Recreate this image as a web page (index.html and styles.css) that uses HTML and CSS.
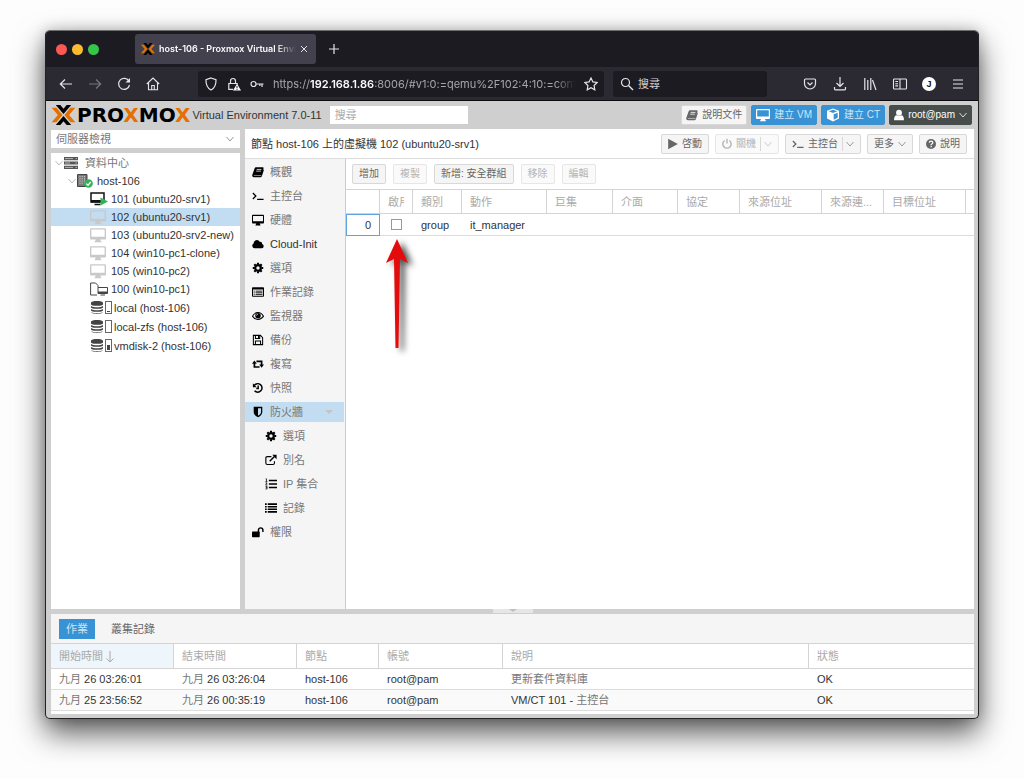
FILE: index.html
```html
<!DOCTYPE html>
<html lang="zh-Hant">
<head>
<meta charset="utf-8">
<title>host-106 - Proxmox Virtual Environment</title>
<link rel="stylesheet" href="styles.css">
</head>
<body>
<svg class="sprite" aria-hidden="true">
  <symbol id="px" viewBox="0 0 26 22"><path d="M4.500 0h5L13 4.200 16.500 0h5L13 10zM4.500 22h5l3.500-4.200 3.500 4.200h5L13 12z" fill="#000"/><path d="M0 3h5.200L12 11l-6.800 8H0l6.800-8zM26 3h-5.200L14 11l6.800 8H26l-6.800-8z" fill="#e57000"/></symbol>
  <symbol id="chev" viewBox="0 0 8 8"><path d="M.5 2L4 6l3.500-4" fill="none" stroke="currentColor"/></symbol>
  <symbol id="book" viewBox="0 0 14 14"><path d="M4.500 1.500h8.200c.7 0 1 .5.8 1.100l-2.300 7.600c-.2.5-.6.8-1.100.8H2.600c-.5 0-.7.6-.2.8h8.200L13.200 4c.6.3.8.6.6 1.100l-2.300 7c-.2.6-.6.9-1.200.9H2.200C.8 13-.1 11.600.4 10.300L3 2.800c.3-.8.8-1.300 1.500-1.300z" fill="currentColor"/><path d="M5.500 4h5.500M4.900 6h5.500" stroke="#fff" stroke-width=".9"/></symbol>
  <symbol id="term" viewBox="0 0 14 14"><path d="M1 3.500L4.500 7 1 10.500M6 11h7.500" fill="none" stroke="currentColor" stroke-width="1.500"/></symbol>
  <symbol id="screen" viewBox="0 0 14 14"><path d="M1 1h12q1 0 1 1v8q0 1-1 1H9l.5 1.500h.5v.8H4v-.8h.5L5 11H1q-1 0-1-1V2q0-1 1-1zm.2 1.200v6.300h11.600V2.200z" fill="currentColor" fill-rule="evenodd"/></symbol>
  <symbol id="cloud" viewBox="0 0 14 14"><path d="M3 12a3 3 0 0 1-1.200-5.600A3.900 3.900 0 0 1 9 4.300a2.300 2.300 0 0 1 2.700 2.800A2.500 2.500 0 0 1 11.500 12z" fill="currentColor"/></symbol>
  <symbol id="gear" viewBox="0 0 14 14"><circle cx="7" cy="7" r="3.300" fill="none" stroke="currentColor" stroke-width="2.600"/><path d="M7 .9v2M7 11.100v2M.9 7h2M11.100 7h2M2.700 2.700l1.400 1.400M9.900 9.900l1.400 1.400M2.700 11.300l1.400-1.400M9.900 4.100l1.400-1.400" stroke="currentColor" stroke-width="2.400"/></symbol>
  <symbol id="listalt" viewBox="0 0 14 14"><path d="M1 1.500h12q1 0 1 1v9q0 1-1 1H1q-1 0-1-1v-9q0-1 1-1zm.2 2.700v7.100h11.600V4.200z" fill="currentColor" fill-rule="evenodd"/><path d="M2 6h1.200M4.200 6h8M2 7.900h1.200M4.200 7.900h8M2 9.800h1.200M4.200 9.800h8" stroke="currentColor"/></symbol>
  <symbol id="eye" viewBox="0 0 14 14"><path d="M.5 7.200Q3.200 3 7 3t6.500 4.200Q10.800 11 7 11T.5 7.200z" fill="none" stroke="currentColor" stroke-width="1.200"/><circle cx="7" cy="6.600" r="3.200" fill="currentColor"/><path d="M5.300 6.500A1.800 1.800 0 0 1 7 4.800" fill="none" stroke="#fff" stroke-width=".8"/></symbol>
  <symbol id="save" viewBox="0 0 14 14"><path d="M1.600 1.600h8.200l2.600 2.600v8.200H1.600zM4 12V8.200h6V12M4 2v3.300h5V2" fill="none" stroke="currentColor" stroke-width="1.200"/><path d="M7 2h1.400v2.700H7z" fill="currentColor"/></symbol>
  <symbol id="retweet" viewBox="0 0 14 14"><path d="M2.800 6v4.500h6M11.200 8.500V4h-6" fill="none" stroke="currentColor" stroke-width="2"/><path d="M0 6.800L2.800 3l2.800 3.800zM8.400 7.500h5.600l-2.800 3.800z" fill="currentColor"/></symbol>
  <symbol id="history" viewBox="0 0 14 14"><path d="M2.600 4A5 5 0 1 1 3 10.300M7.200 4v3.500H5" fill="none" stroke="currentColor" stroke-width="1.700"/><path d="M1 1.500V6h4.500z" fill="currentColor"/></symbol>
  <symbol id="shield" viewBox="0 0 14 14"><path d="M2 1h10v6c0 3-2.500 5-5 6.200C4.500 12 2 10 2 7zm5 1.600v8.900c2-1.100 3.500-2.600 3.500-4.500V2.600z" fill="currentColor" fill-rule="evenodd"/></symbol>
  <symbol id="extlink" viewBox="0 0 14 14"><path d="M7.500 3H2.700Q1 3 1 4.500v6Q1 12.200 2.700 12.200h6.600q1.700 0 1.700-1.700V8.500" fill="none" stroke="currentColor" stroke-width="1.300"/><path d="M5.500 8.500L11 3" stroke="currentColor" stroke-width="1.700"/><path d="M8.500 1H13.500v5z" fill="currentColor"/></symbol>
  <symbol id="listol" viewBox="0 0 14 14"><path d="M4.500 2.800H14M4.500 7H14M4.500 11.200H14" stroke="currentColor" stroke-width="1.800"/><path d="M.8 1h1v3M.5 4.200h2.300M.6 5.800h1.800L.8 8.200h2M.6 9.800h1.800v3H.6M1 11.200h1.400" fill="none" stroke="currentColor" stroke-width=".9"/></symbol>
  <symbol id="list" viewBox="0 0 14 14"><path d="M0 2.500h2M3.200 2.500H14M0 5.500h2M3.200 5.500H14M0 8.500h2M3.200 8.500H14M0 11.500h2M3.200 11.500H14" stroke="currentColor" stroke-width="1.900"/></symbol>
  <symbol id="unlock" viewBox="0 0 14 14"><rect y="6.500" width="9" height="6.500" rx=".8" fill="currentColor"/><path d="M7.500 7V4.800a2.600 2.600 0 0 1 5.200 0V7" fill="none" stroke="currentColor" stroke-width="1.700"/></symbol>
  <symbol id="cube" viewBox="0 0 14 14"><path d="M7 .5l6 2.200v7.800l-6 3-6-3V2.700zm0 1.300L2.800 3.300 7 4.900l4.200-1.600zm.7 4.500v5.500l4-2V4.800z" fill="currentColor" fill-rule="evenodd"/></symbol>
  <symbol id="user" viewBox="1 0 12 14"><circle cx="7" cy="4.300" r="3.500" fill="currentColor"/><path d="M1.200 13.300c-.5-3.200.9-5.800 3-6q2.800 2 5.600 0c2.100.2 3.500 2.800 3 6z" fill="currentColor"/></symbol>
  <symbol id="play" viewBox="1 0 12 14"><path d="M1.200.8l11.600 6.200-11.600 6.200z" fill="currentColor"/></symbol>
  <symbol id="power" viewBox="1 0 12 14"><path d="M4.200 2.800a5 5 0 1 0 5.600 0M7 .8v5.700" fill="none" stroke="currentColor" stroke-width="1.700"/></symbol>
  <symbol id="help" viewBox="1 1 12 12"><circle cx="7" cy="7" r="6" fill="currentColor"/><path d="M4.900 5.300q.2-1.900 2.200-1.900T9.200 5.200Q9.200 6.300 7.200 7.600v.8M7.200 9.400v1.600" fill="none" stroke="#fff" stroke-width="1.500"/></symbol>
  <symbol id="server" viewBox="0 0 14 12"><path d="M0 0h14v3.200H0zM0 4.400h14v3.200H0zM0 8.800h14V12H0z" fill="#555"/><path d="M1 1.600h8M1 6h5M1 10.400h8M11.500 1.600h1.500M11.500 6h1.500M11.500 10.400h1.500" stroke="#ccc" stroke-width=".8"/></symbol>
  <symbol id="node" viewBox="0 0 16 14"><path d="M.5.500h9.500v12H.5z" fill="#777" stroke="#444"/><path d="M3 2v9M5.200 2v9M7.500 2v9" stroke="#ccc" stroke-width="1" stroke-dasharray="1.200 1"/><circle cx="11.500" cy="9.500" r="4.300" fill="#30b455"/><path d="M9.300 9.600l1.700 1.700 2.700-3.300" fill="none" stroke="#fff" stroke-width="1.300"/></symbol>
  <symbol id="disks" viewBox="0 0 12 13"><path d="M0 2c0-2.600 12-2.600 12 0v1.200c0 2.200-12 2.200-12 0zM0 5c2 1.700 10 1.700 12 0v1.200c0 2.200-12 2.200-12 0zM0 8c2 1.700 10 1.700 12 0v1.200c0 2.200-12 2.200-12 0zM0 11c2 1.700 10 1.700 12 0-.500 2.500-11.500 2.500-12 0z" fill="#444"/></symbol>
</svg>

<main class="window">
  <header class="tabstrip">
    <div class="lights"><i class="light close"></i><i class="light minimize"></i><i class="light zoom"></i></div>
    <div class="tab">
      <svg class="tab-icon"><use href="#px"/></svg>
      <span class="tab-title">host-106 - Proxmox Virtual Envi</span>
      <button class="bare" aria-label="關閉分頁"><svg class="ic8" viewBox="0 0 8 8"><path d="M1 1l6 6M7 1L1 7" stroke="currentColor"/></svg></button>
    </div>
    <button class="bare" aria-label="新分頁"><svg class="ic12" viewBox="0 0 12 12"><path d="M6 1v10M1 6h10" stroke="currentColor" stroke-width="1.200"/></svg></button>
  </header>

  <nav class="navbar">
    <div class="nav-group">
      <button class="bare" aria-label="上一頁"><svg class="ic16" viewBox="0 0 16 16"><path d="M14 8H2.500M7 3.500L2.300 8 7 12.500" fill="none" stroke="currentColor" stroke-width="1.200"/></svg></button>
      <button class="bare dim" aria-label="下一頁"><svg class="ic16" viewBox="0 0 16 16"><path d="M2 8h11.500M9 3.500L13.700 8 9 12.500" fill="none" stroke="currentColor" stroke-width="1.200"/></svg></button>
      <button class="bare" aria-label="重新載入"><svg class="ic16" viewBox="0 0 16 16"><path d="M13 5.300A5.500 5.500 0 1 0 13.500 9" fill="none" stroke="currentColor" stroke-width="1.200"/><path d="M14 2v4.500H9.500z" fill="currentColor"/></svg></button>
      <button class="bare" aria-label="首頁"><svg class="ic16" viewBox="0 0 16 16"><path d="M1.800 8L8 2l6.200 6M3.500 6.800v7h9v-7M6.700 13.800V9.500h2.600v4.300" fill="none" stroke="currentColor" stroke-width="1.100"/></svg></button>
    </div>
    <div class="url">
      <svg class="ic14" viewBox="0 0 14 14"><path d="M7 1l5 1.800c.2 5-1.500 8.400-5 10.200C3.500 11.200 1.800 7.800 2 2.800z" fill="none" stroke="currentColor" stroke-width="1.200"/></svg>
      <svg class="ic14" viewBox="0 0 14 14"><path d="M6 12.300H1.800V6.500h8.400v1M3.500 6.500V4a2.500 2.500 0 0 1 5 0v2.500" fill="none" stroke="currentColor" stroke-width="1.200"/><path d="M10 6.800l4 6.700H6z" fill="#fff"/><path d="M10 9v2.200M10 11.800v1" stroke="#1c1b22" stroke-width="1"/></svg>
      <svg class="ic14" viewBox="0 0 14 14"><circle cx="3.500" cy="7" r="2.500" fill="none" stroke="currentColor" stroke-width="1.200"/><path d="M6 7h7.500M12 7v3M9.800 7v2" fill="none" stroke="currentColor" stroke-width="1.200"/></svg>
      <span class="url-text">https://<b>192.168.1.86</b>:8006/#v1:0:=qemu%2F102:4:10:=cont</span>
      <button class="bare" aria-label="加入書籤"><svg class="ic14" viewBox="0 0 14 14"><path d="M7 1l1.900 3.900 4.200.6-3 3 .7 4.300L7 10.800l-3.800 2 .7-4.300-3-3 4.200-.6z" fill="none" stroke="currentColor" stroke-width="1.200"/></svg></button>
    </div>
    <label class="search">
      <svg class="ic14" viewBox="0 0 14 14"><circle cx="5.500" cy="5.500" r="4" fill="none" stroke="currentColor" stroke-width="1.200"/><path d="M8.500 8.500L13 13" stroke="currentColor" stroke-width="1.400"/></svg>
      <input type="text" placeholder="搜尋" aria-label="搜尋">
    </label>
    <div class="nav-group nav-end">
      <button class="bare" aria-label="Pocket"><svg class="ic16" viewBox="0 0 16 16"><path d="M3.500 3h9q1 0 1 1v3.500a5.500 5.500 0 0 1-11 0V4q0-1 1-1zM5.500 6.500L8 9l2.500-2.500" fill="none" stroke="currentColor" stroke-width="1.200"/></svg></button>
      <button class="bare" aria-label="下載"><svg class="ic16" viewBox="0 0 16 16"><path d="M8 1v9M4.500 7L8 10.500 11.500 7M2.500 11v2q0 .8.800.8h9.400q.8 0 .8-.8v-2" fill="none" stroke="currentColor" stroke-width="1.200"/></svg></button>
      <button class="bare" aria-label="書庫"><svg class="ic16" viewBox="0 0 16 16"><path d="M2.800 2v12M5.800 4v10M8.800 2v12M10.500 4l3.500 10" fill="none" stroke="currentColor" stroke-width="1.200"/></svg></button>
      <button class="bare" aria-label="側邊欄"><svg class="ic16" viewBox="0 0 16 16"><path d="M2.300 3h11.400q.8 0 .8.800v8.400q0 .8-.8.800H2.300q-.8 0-.8-.8V3.800q0-.8.800-.8zM8 3v10M3.300 5.500h2.700M3.300 7.700h2.700M3.300 9.900h2.700" fill="none" stroke="currentColor" stroke-width="1.100"/></svg></button>
      <button class="bare avatar">J</button>
      <button class="bare" aria-label="選單"><svg class="ic16" viewBox="0 0 16 16"><path d="M3 4h10M3 8h10M3 12h10" stroke="currentColor" stroke-width="1.200"/></svg></button>
    </div>
  </nav>

  <div class="app">
    <header class="apphead">
      <svg class="logo-mark"><use href="#px"/></svg>
      <strong class="wordmark">PRO<em>X</em>MO<em>X</em></strong>
      <span class="version">Virtual Environment 7.0-11</span>
      <input class="gsearch" type="text" placeholder="搜尋" aria-label="搜尋資源">
      <div class="head-actions">
        <button class="btn"><svg class="ic12"><use href="#book"/></svg>說明文件</button>
        <button class="btn blue"><svg class="ic14"><use href="#screen"/></svg>建立 VM</button>
        <button class="btn blue"><svg class="ic14"><use href="#cube"/></svg>建立 CT</button>
        <button class="btn dark"><svg class="ic10"><use href="#user"/></svg>root@pam<svg class="ic8"><use href="#chev"/></svg></button>
      </div>
    </header>

    <div class="workspace">
      <aside class="resources">
        <div class="view">
          <select aria-label="檢視"><option>伺服器檢視</option></select>
          <svg class="ic8"><use href="#chev"/></svg>
        </div>
        <ul class="tree">
          <li class="dc"><svg class="ic8 twist"><use href="#chev"/></svg><svg class="i-server"><use href="#server"/></svg><span>資料中心</span></li>
          <li class="host"><svg class="ic8 twist"><use href="#chev"/></svg><svg class="i-node"><use href="#node"/></svg><span>host-106</span></li>
          <li class="vm"><svg class="i-vm" viewBox="0 0 18 14"><path d="M1 1h13v9H1zM4.500 12.500h6" fill="none" stroke="#111" stroke-width="1.500"/><path d="M1 8h13v2.500H1z" fill="#111"/><path d="M10.500 5.500l7.500 4-7.500 4z" fill="#30b455"/></svg><span>101 (ubuntu20-srv1)</span></li>
          <li class="vm selected"><svg class="ic16 off"><use href="#screen"/></svg><span>102 (ubuntu20-srv1)</span></li>
          <li class="vm"><svg class="ic16 off"><use href="#screen"/></svg><span>103 (ubuntu20-srv2-new)</span></li>
          <li class="vm"><svg class="ic16 off"><use href="#screen"/></svg><span>104 (win10-pc1-clone)</span></li>
          <li class="vm"><svg class="ic16 off"><use href="#screen"/></svg><span>105 (win10-pc2)</span></li>
          <li class="vm"><svg class="i-vm" viewBox="0 0 18 14"><path d="M7 13H.6V1h5L8 3.500v2" fill="none" stroke="#444"/><path d="M8 5.500h9.500v6H8zM10.500 13h4.500" fill="#fff" stroke="#444"/><path d="M8 9.500h9.500v2H8z" fill="#444"/></svg><span>100 (win10-pc1)</span></li>
          <li class="store"><svg class="i-disks"><use href="#disks"/></svg><i class="gauge low"></i><span>local (host-106)</span></li>
          <li class="store"><svg class="i-disks"><use href="#disks"/></svg><i class="gauge"></i><span>local-zfs (host-106)</span></li>
          <li class="store"><svg class="i-disks"><use href="#disks"/></svg><i class="gauge mid"></i><span>vmdisk-2 (host-106)</span></li>
        </ul>
      </aside>

      <section class="detail">
        <header class="detail-head">
          <h1>節點 host-106 上的虛擬機 102 (ubuntu20-srv1)</h1>
          <button class="btn"><svg class="ic10"><use href="#play"/></svg>啓動</button>
          <button class="btn" disabled><svg class="ic10"><use href="#power"/></svg>關機<span class="split"><svg class="ic8"><use href="#chev"/></svg></span></button>
          <button class="btn"><svg class="ic12"><use href="#term"/></svg>主控台<span class="split"><svg class="ic8"><use href="#chev"/></svg></span></button>
          <button class="btn">更多<svg class="ic8"><use href="#chev"/></svg></button>
          <button class="btn"><svg class="ic10"><use href="#help"/></svg>說明</button>
        </header>
        <div class="detail-body">
          <nav class="menu">
            <a href="#summary"><svg class="ic12"><use href="#book"/></svg>概觀</a>
            <a href="#console"><svg class="ic12"><use href="#term"/></svg>主控台</a>
            <a href="#hardware"><svg class="ic12"><use href="#screen"/></svg>硬體</a>
            <a href="#cloudinit" class="latin"><svg class="ic12"><use href="#cloud"/></svg>Cloud-Init</a>
            <a href="#options"><svg class="ic12"><use href="#gear"/></svg>選項</a>
            <a href="#tasks"><svg class="ic12"><use href="#listalt"/></svg>作業記錄</a>
            <a href="#monitor"><svg class="ic12"><use href="#eye"/></svg>監視器</a>
            <a href="#backup"><svg class="ic12"><use href="#save"/></svg>備份</a>
            <a href="#replication"><svg class="ic12"><use href="#retweet"/></svg>複寫</a>
            <a href="#snapshot"><svg class="ic12"><use href="#history"/></svg>快照</a>
            <a href="#firewall" class="current"><svg class="ic12"><use href="#shield"/></svg>防火牆<svg class="ic8 caret" viewBox="0 0 8 8"><path d="M0 2h8L4 6z" fill="currentColor"/></svg></a>
            <a href="#fw-options" class="sub"><svg class="ic12"><use href="#gear"/></svg>選項</a>
            <a href="#fw-alias" class="sub"><svg class="ic12"><use href="#extlink"/></svg>別名</a>
            <a href="#fw-ipset" class="sub"><svg class="ic12"><use href="#listol"/></svg>IP 集合</a>
            <a href="#fw-log" class="sub"><svg class="ic12"><use href="#list"/></svg>記錄</a>
            <a href="#permissions"><svg class="ic12"><use href="#unlock"/></svg>權限</a>
          </nav>
          <div class="rules">
            <div class="toolbar">
              <button class="btn">增加</button>
              <button class="btn" disabled>複製</button>
              <button class="btn">新增: 安全群組</button>
              <button class="btn" disabled>移除</button>
              <button class="btn" disabled>編輯</button>
            </div>
            <table class="grid">
              <colgroup><col class="w34"><col class="w33"><col class="w49"><col class="w85"><col class="w66"><col class="w65"><col class="w62"><col class="w82"><col class="w62"><col class="w82"><col></colgroup>
              <thead><tr><th></th><th><span class="clip">啟用</span></th><th>類別</th><th>動作</th><th>巨集</th><th>介面</th><th>協定</th><th>來源位址</th><th>來源連...</th><th>目標位址</th><th></th></tr></thead>
              <tbody><tr><td class="num focus">0</td><td class="tick"><input type="checkbox" aria-label="啟用規則 0"></td><td>group</td><td>it_manager</td><td></td><td></td><td></td><td></td><td></td><td></td><td></td></tr></tbody>
            </table>
            <svg class="arrow" viewBox="0 0 30 120"><path d="M11 1l11 24-8-4-1.500 89h-3L8 21l-8 4z" fill="#e30b0b"/></svg>
          </div>
        </div>
      </section>
    </div>

    <div class="splitter"><i class="handle"></i></div>

    <section class="log">
      <div class="log-tabs"><button class="active">作業</button><button>叢集記錄</button></div>
      <table class="grid tasks">
        <colgroup><col class="w123"><col class="w123"><col class="w82"><col class="w124"><col><col class="w165"></colgroup>
        <thead><tr><th class="sorted">開始時間<svg class="ic10" viewBox="0 0 10 12"><path d="M5 0v11M1.500 7.500L5 11l3.500-3.500" fill="none" stroke="currentColor"/></svg></th><th>結束時間</th><th>節點</th><th>帳號</th><th>說明</th><th>狀態</th></tr></thead>
        <tbody>
          <tr><td><span class="cjk">九月</span> 26 03:26:01</td><td><span class="cjk">九月</span> 26 03:26:04</td><td>host-106</td><td>root@pam</td><td><span class="cjk">更新套件資料庫</span></td><td>OK</td></tr>
          <tr class="alt"><td><span class="cjk">九月</span> 25 23:56:52</td><td><span class="cjk">九月</span> 26 00:35:19</td><td>host-106</td><td>root@pam</td><td>VM/CT 101 - <span class="cjk">主控台</span></td><td>OK</td></tr>
        </tbody>
      </table>
    </section>
  </div>
</main>
</body>
</html>
```
FILE: styles.css
```css
* { box-sizing: border-box; }
body {
  margin: 0;
  padding: 30px 45px 60px;
  min-height: 100vh;
  display: flex;
  background: #fdfdfd;
  font: 11px/14px "Liberation Sans", "Noto Sans CJK TC", sans-serif;
  color: #333;
}
button, input, select { font: inherit; color: inherit; }
svg { display: block; flex: none; }
.sprite { position: absolute; width: 0; height: 0; }
.ic8 { width: 8px; height: 8px; }
.ic10 { width: 10px; height: 12px; }
.ic12 { width: 12px; height: 12px; }
.ic14 { width: 14px; height: 14px; }
.ic16 { width: 16px; height: 16px; }

.window {
  flex: 1;
  min-width: 0;
  display: flex;
  flex-direction: column;
  border: 1px solid #222;
  border-top-color: #6b6f6d;
  border-radius: 5px;
  overflow: hidden;
  background: #cfcfcf;
  box-shadow: 0 14px 30px rgba(0, 0, 0, .65), 0 0 14px rgba(0, 0, 0, .2);
}

/* Browser chrome */
.bare {
  padding: 0;
  border: 0;
  background: none;
  color: #e4e4e8;
  display: flex;
  flex: none;
}
.bare.dim { color: #77767e; }
.tabstrip {
  display: flex;
  align-items: center;
  height: 36px;
  padding: 0 10px;
  background: #1c1b22;
}
.lights { display: flex; gap: 5px; margin-right: 36px; }
.light { width: 11px; height: 11px; border-radius: 50%; }
.close { background: #fc5753; }
.minimize { background: #fdbc2e; }
.zoom { background: #33c748; }
.tab {
  display: flex;
  align-items: center;
  gap: 4px;
  flex: 0 1 181px;
  min-width: 0;
  height: 30px;
  margin-right: 12px;
  padding: 0 8px 0 6px;
  border-radius: 3px;
  background: #42414d;
  color: #fbfbfe;
}
.tab-icon { width: 14px; height: 12px; }
.tab-title {
  flex: 1;
  min-width: 0;
  overflow: hidden;
  white-space: nowrap;
  font: 600 9px/14px Inter, sans-serif;
  mask-image: linear-gradient(to left, transparent, #000 20px);
}
.navbar {
  display: flex;
  align-items: center;
  height: 34px;
  padding: 0 12px;
  border-bottom: 1px solid #0c0c0d;
  background: #2b2a33;
}
.nav-group { display: flex; align-items: center; gap: 13px; }
.nav-end { gap: 14px; margin-left: auto; }
.url, .search {
  display: flex;
  align-items: center;
  height: 26px;
  border-radius: 3px;
  background: #1c1b22;
  color: #e4e4e8;
}
.url {
  flex: 0 1 406px;
  min-width: 0;
  gap: 9px;
  margin-left: 37px;
  padding: 0 6px;
}
.url-text {
  flex: 1;
  min-width: 0;
  overflow: hidden;
  white-space: nowrap;
  font: 11px/16px Inter, sans-serif;
  color: #a5a5ab;
  mask-image: linear-gradient(to left, transparent, #000 20px);
}
.url-text b { font-weight: 600; color: #fbfbfe; }
.search { flex: 0 1 154px; min-width: 0; gap: 4px; margin-left: 9px; padding: 0 7px; }
.search input { flex: 1; min-width: 0; border: 0; padding: 0; background: none; }
.search input::placeholder { color: #d0d0d5; opacity: 1; }
.avatar {
  width: 14px;
  height: 14px;
  align-items: center;
  justify-content: center;
  border-radius: 50%;
  background: #fff;
  color: #111;
  font: bold 9px/14px "Liberation Sans", sans-serif;
}

/* Application */
.app {
  flex: 1;
  display: flex;
  flex-direction: column;
  padding: 0 4px 4px 5px;
}
.apphead { display: flex; align-items: center; height: 28px; padding-right: 2px; }
.logo-mark { width: 25px; height: 20px; margin-right: 1px; }
.wordmark {
  font: bold 20px/24px "DejaVu Sans", sans-serif;
  color: #000;
}
.wordmark em { font-style: normal; color: #e57000; }
.version { margin-left: 2px; white-space: nowrap; }
.gsearch {
  flex: 0 1 138px;
  min-width: 0;
  height: 18px;
  margin-left: 8px;
  padding: 0 5px;
  border: 0;
  background: #fff;
}
.gsearch::placeholder { color: #aaa; opacity: 1; }
.head-actions { display: flex; gap: 4px; margin-left: auto; }

.btn {
  display: flex;
  align-items: center;
  justify-content: center;
  gap: 4px;
  flex: none;
  height: 20px;
  padding: 0 6px;
  border: 1px solid #d8d8d8;
  border-radius: 2px;
  background: #f5f5f5;
  color: #666;
  font-size: 10px;
  white-space: nowrap;
}
.btn .ic8 { color: #999; }
.btn:disabled { border-color: #e6e6e6; background: #fafafa; color: #b4b4b4; }
.btn:disabled .ic8 { color: #ccc; }
.head-actions .btn { padding: 0 4px; }
.btn.blue { border-color: #3892d4; background: #3892d4; color: #cfe6f7; }
.btn.blue svg { color: #fff; }
.btn.dark { border-color: #464d4b; background: #464d4b; color: #fff; }
.btn.dark .ic8 { color: #ddd; }
.split { padding-left: 3px; border-left: 1px solid #d8d8d8; display: flex; align-items: center; height: 14px; }

.workspace { flex: 1; display: flex; gap: 5px; min-height: 0; }
.resources {
  flex: 0 0 189px;
  display: flex;
  flex-direction: column;
  gap: 5px;
  padding-top: 1px;
}
.view { display: grid; grid-template-columns: 1fr 14px; align-items: center; background: #fff; }
.view select {
  grid-area: 1 / 1 / 2 / 3;
  height: 18px;
  padding: 0 5px;
  border: 0;
  appearance: none;
  background: none;
  color: #777;
}
.view svg { grid-area: 1 / 2; color: #999; }
.tree { flex: 1; margin: 0; padding: 1px 0 0; list-style: none; background: #fff; }
.tree li { display: flex; align-items: center; height: 18px; white-space: nowrap; }
.tree .selected { background: #c2ddf2; }
.tree .dc { padding-left: 4px; color: #777; }
.tree .host { padding-left: 17px; }
.tree .vm { padding-left: 39px; }
.tree .store { height: 19px; padding-left: 40px; }
.tree .dc span { margin-left: 7px; }
.tree .host span { margin-left: 4px; }
.vm svg { margin-right: 3px; }
.vm svg.off { margin-right: 5px; }
.twist { margin-right: 1px; color: #bbb; }
.off { color: #c9c9c9; }
.i-server { width: 14px; height: 12px; }
.i-node { width: 16px; height: 14px; }
.i-vm { width: 18px; height: 14px; }
.i-disks { width: 12px; height: 13px; }
.gauge {
  display: flex;
  align-items: flex-end;
  width: 7px;
  height: 13px;
  margin: 0 2px;
  padding: 1px;
  border: 1px solid #666;
}
.gauge::after { content: ""; width: 100%; background: #444; }
.gauge.low::after { height: 1px; }
.gauge.mid::after { height: 5px; }

.detail { flex: 1; min-width: 0; display: flex; flex-direction: column; background: #fff; }
.detail-head {
  display: flex;
  align-items: center;
  gap: 6px;
  height: 30px;
  padding: 0 7px 0 6px;
  border-bottom: 1px solid #ddd;
}
h1 { flex: 1; margin: 0; font: inherit; white-space: nowrap; }
.detail-body { flex: 1; display: flex; min-height: 0; }
.menu {
  flex: 0 0 101px;
  display: flex;
  flex-direction: column;
  gap: 4px;
  padding: 3px 1px 4px 0;
  border-right: 1px solid #ccc;
  background: #f5f5f5;
}
.menu a {
  display: flex;
  align-items: center;
  gap: 6px;
  height: 20px;
  padding-left: 7px;
  color: #777;
  text-decoration: none;
}
.menu a.latin { color: #333; }
.menu a > svg:first-child { color: #000; }
.menu .sub { padding-left: 20px; }
.menu .current { background: #c2ddf2; }
.menu .caret { margin: 0 11px 0 auto; color: #c4c4c4; }

.rules { position: relative; flex: 1; min-width: 0; }
.toolbar { display: flex; align-items: center; gap: 7px; height: 30px; padding: 0 6px; }

.grid { width: 100%; table-layout: fixed; border-collapse: separate; border-spacing: 0; }
.grid th, .grid td { padding: 0 0 0 8px; text-align: left; font-weight: normal; white-space: nowrap; }
.grid th {
  height: 25px;
  border: solid #d4d4d4;
  border-width: 1px 1px 1px 0;
  color: #aaa;
}
.grid th:last-child { border-right: 0; }
.grid td { height: 22px; border-bottom: 1px solid #ddd; }
.grid .num { padding-right: 8px; text-align: right; }
.grid .focus { border: 1px solid #5fa2dd; }
.grid .tick { padding-left: 11px; }
.clip { display: block; width: 16px; overflow: hidden; }
.tick input {
  display: block;
  width: 11px;
  height: 11px;
  margin: 0;
  appearance: none;
  border: 1px solid #999;
  background: #fff;
}
.w33 { width: 33px; }
.w34 { width: 34px; }
.w49 { width: 49px; }
.w62 { width: 62px; }
.w65 { width: 65px; }
.w66 { width: 66px; }
.w82 { width: 82px; }
.w85 { width: 85px; }
.w123 { width: 123px; }
.w124 { width: 124px; }
.w165 { width: 165px; }
.arrow {
  position: absolute;
  left: 40px;
  top: 79px;
  width: 30px;
  height: 120px;
  overflow: visible;
  filter: drop-shadow(5px 3px 3px rgba(0, 0, 0, .7));
}

.splitter { display: flex; justify-content: center; height: 5px; }
.handle { width: 40px; height: 4px; background: #e6e6e6; }
.handle::after {
  content: "";
  display: block;
  width: 0;
  margin: 0 auto;
  border: 4px solid transparent;
  border-top: 3px solid #c0c0c0;
  border-bottom: 0;
}

.log { background: #fff; padding-bottom: 3px; }
.log-tabs {
  display: flex;
  align-items: center;
  gap: 8px;
  height: 29px;
  padding: 0 8px;
  background: #f5f5f5;
}
.log-tabs button { height: 20px; padding: 0 8px; border: 0; background: none; color: #666; }
.log-tabs .active { padding: 0 7px; background: #3892d4; color: #cfe6f7; }
.tasks td { height: 21px; }
.tasks th { height: 26px; }
.tasks .sorted { background: #eef5fb; }
.sorted svg { display: inline-block; margin-left: 2px; vertical-align: middle; }
.tasks .alt { background: #fafafa; }
.cjk { color: #777; }
```
